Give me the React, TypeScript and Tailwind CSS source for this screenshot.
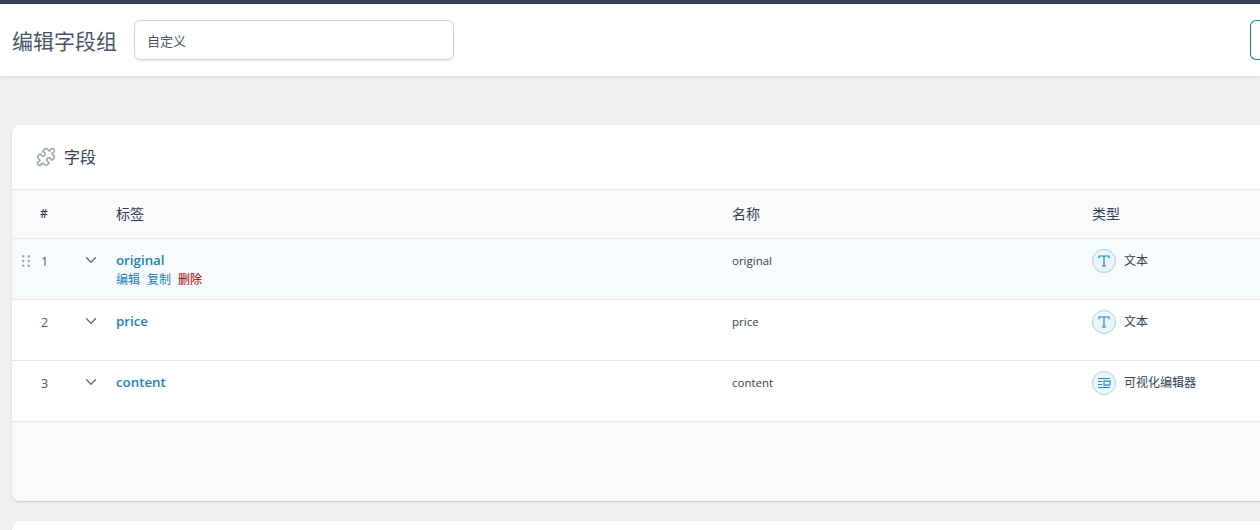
import React from "react";
import { ChevronDown, Puzzle } from "lucide-react";

const FONT = "font-['Open_Sans','Noto_Sans_CJK_SC',sans-serif]";

function TextIcon() {
  return (
    <svg viewBox="0 0 24 24" className="h-6 w-6 shrink-0" fill="none">
      <circle cx="12" cy="12" r="11.5" fill="#ebf5fa" stroke="#a5d2e7" />
      <path d="M7 9.2V7h10v2.2M12 7v10M10 17h4" stroke="#1a8cc4" strokeWidth="1.2" />
    </svg>
  );
}

function EditorIcon() {
  return (
    <svg viewBox="0 0 24 24" className="h-6 w-6 shrink-0" fill="none">
      <circle cx="12" cy="12" r="11.5" fill="#ebf5fa" stroke="#a5d2e7" />
      <path d="M6 7.5h12M6 16.5h12M6 10.5h4M6 13.5h4" stroke="#1a8cc4" strokeWidth="1.2" />
      <rect x="12" y="10" width="6" height="4" stroke="#1a8cc4" strokeWidth="1.2" />
    </svg>
  );
}

function Grip() {
  return (
    <svg viewBox="0 0 8 12" className="h-3 w-2" fill="#98a2b3">
      <circle cx="1.2" cy="1.2" r="1.2" />
      <circle cx="6.8" cy="1.2" r="1.2" />
      <circle cx="1.2" cy="6" r="1.2" />
      <circle cx="6.8" cy="6" r="1.2" />
      <circle cx="1.2" cy="10.8" r="1.2" />
      <circle cx="6.8" cy="10.8" r="1.2" />
    </svg>
  );
}

function Row({
  n,
  name,
  type,
  active,
  icon,
}: {
  n: number;
  name: string;
  type: string;
  active?: boolean;
  icon: React.ReactNode;
}) {
  return (
    <div className={`flex h-[61px] border-b border-[#e4e7ec] ${active ? "bg-[#f7fbfe]" : "bg-white"}`}>
      <div className="flex w-[28px] justify-start pt-[16px] pl-[10px]">{active && <Grip />}</div>
      <div className="w-[42px] pt-[14px] pl-px text-[12.5px] leading-[18px] text-[#475467]">
        <span>{n}</span>
      </div>
      <div className="w-[34px] pt-[12px]">
        <ChevronDown className="h-[18px] w-[18px] text-[#667085]" strokeWidth={2} />
      </div>
      <div className="w-[616px] pt-[12px]">
        <div className="text-[13.3px] leading-[18px] font-semibold text-[#1782bf]">{name}</div>
        {active && (
          <div className="mt-[2px] flex gap-[7px] text-[12px] leading-[18px] text-[#1782bf]">
            <span>编辑</span>
            <span>复制</span>
            <span className="text-[#a00000]">删除</span>
          </div>
        )}
      </div>
      <div className="w-[360px] pt-[13px] text-[11.5px] leading-[18px] text-[#344054]">{name}</div>
      <div className="flex items-start gap-[8px] pt-[10px]">
        {icon}
        <span className="pt-[3px] text-[12px] leading-[18px] text-[#344054]">{type}</span>
      </div>
    </div>
  );
}

export default function App() {
  return (
    <div className={`h-[530px] w-full overflow-hidden bg-[#f0f0f0] ${FONT}`}>
      <div className="h-1 bg-[#344054]" />
      <header className="flex h-[72px] items-center bg-white pl-3 shadow-[0_1px_3px_rgba(16,24,40,0.12)]">
        <h1 className="pt-[1px] text-[21px] leading-[28px] font-normal text-[#475467]">编辑字段组</h1>
        <div className="ml-[17px] flex h-10 w-[320px] items-center rounded-md border border-[#d0d5dd] bg-white pt-[4px] pl-3 text-[13px] text-[#475467] shadow-[0_1px_2px_rgba(16,24,40,0.1)]">
          自定义
        </div>
        <div className="ml-auto h-10 w-[10px] rounded-l-md border-y border-l border-[#0783be]" />
      </header>
      <main className="w-[1400px] pt-[49px] pl-3">
        <section className="overflow-hidden rounded-lg bg-white shadow-[0_1px_2px_rgba(16,24,40,0.2)]">
          <div className="flex h-[65px] items-center gap-[8px] border-b border-[#e4e7ec] pl-[24px]">
            <Puzzle className="h-5 w-5 text-[#a0a8bb]" strokeWidth={2} />
            <span className="text-[16px] leading-[24px] text-[#344054]">字段</span>
          </div>
          <div className="flex h-[49px] items-center border-b border-[#e4e7ec] bg-[#f9fafb] pb-[2px] text-[14px] text-[#344054]">
            <div className="w-[104px] pt-[2px] pl-[28px] text-[12px] font-semibold">#</div>
            <div className="w-[616px]">标签</div>
            <div className="w-[360px]">名称</div>
            <div>类型</div>
          </div>
          <Row n={1} name="original" type="文本" active icon={<TextIcon />} />
          <Row n={2} name="price" type="文本" icon={<TextIcon />} />
          <Row n={3} name="content" type="可视化编辑器" icon={<EditorIcon />} />
          <div className="h-[79px] bg-[#f9fafb]" />
        </section>
        <section className="mt-5 h-[60px] rounded-lg bg-white shadow-[0_1px_2px_rgba(16,24,40,0.2)]" />
      </main>
    </div>
  );
}
